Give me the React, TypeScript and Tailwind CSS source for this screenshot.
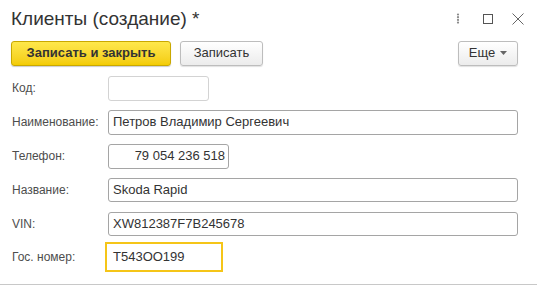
import React from "react";

const Row = ({ label, children, h = "h-[34px]" }: { label: string; children: React.ReactNode; h?: string }) => (
  <div className={`flex items-center ${h}`}>
    <div className="w-[96px] shrink-0 text-[12px] text-[#4d4d4d]">{label}</div>
    {children}
  </div>
);

export default function App() {
  return (
    <div
      className="w-[537px] h-[286px] bg-white relative overflow-hidden flex flex-col"
      style={{ fontFamily: '"Liberation Sans", Arial, sans-serif' }}
    >
      {/* Title row */}
      <div className="flex items-center h-[34px] pl-[11px] pr-[4px] pt-[3px]">
        <div className="text-[19px] leading-[22px] text-[#333333] flex-1">Клиенты (создание) *</div>
        <div className="flex items-center">
          <div className="w-[30px] flex justify-center">
            <svg width="4" height="11" viewBox="0 0 4 11">
              <circle cx="2" cy="1.5" r="1.1" fill="#8a8a8a" />
              <circle cx="2" cy="4.2" r="1.1" fill="#8a8a8a" />
              <circle cx="2" cy="6.9" r="1.1" fill="#8a8a8a" />
              <circle cx="2" cy="9.6" r="1.1" fill="#8a8a8a" />
            </svg>
          </div>
          <div className="w-[30px] flex justify-center">
            <div className="w-[10px] h-[10px] border border-[#555555]" />
          </div>
          <div className="w-[30px] flex justify-center">
            <svg width="12" height="12" viewBox="0 0 12 12">
              <path d="M0.5 0.5 L11.5 11.5 M11.5 0.5 L0.5 11.5" stroke="#666666" strokeWidth="1" />
            </svg>
          </div>
        </div>
      </div>

      {/* Buttons row */}
      <div className="flex items-center h-[26px] mt-[6px] pl-[11px] pr-[19px]">
        <button className="h-[25px] w-[160px] rounded-[3px] border border-[#c9a800] bg-gradient-to-b from-[#ffe84a] to-[#f3cc00] text-[13px] font-bold text-[#333333] shadow-[0_1px_1px_rgba(0,0,0,0.2)]">
          Записать и закрыть
        </button>
        <button className="ml-[9px] h-[25px] w-[83px] rounded-[3px] border border-[#bdbdbd] bg-gradient-to-b from-[#ffffff] to-[#ececec] text-[13px] text-[#333333] shadow-[0_1px_1px_rgba(0,0,0,0.12)]">
          Записать
        </button>
        <div className="flex-1" />
        <button className="h-[25px] w-[60px] rounded-[3px] border border-[#bdbdbd] bg-gradient-to-b from-[#ffffff] to-[#ececec] text-[13px] text-[#333333] shadow-[0_1px_1px_rgba(0,0,0,0.12)] flex items-center justify-center gap-[5px]">
          <span>Еще</span>
          <svg width="7" height="4" viewBox="0 0 7 4">
            <path d="M0 0 L7 0 L3.5 4 Z" fill="#666666" />
          </svg>
        </button>
      </div>

      {/* Form */}
      <div className="flex flex-col pl-[12px] pr-[19px] mt-[5px] text-[12px]">
        <Row label="Код:">
          <div className="w-[101px] h-[25px] rounded-[3px] border border-[#d3d3d3] bg-white" />
        </Row>
        <Row label="Наименование:">
          <div className="flex-1 h-[25px] rounded-[3px] border border-[#a5a5a5] bg-white flex items-center px-[4px] text-[13px] text-[#333333]">
            Петров Владимир Сергеевич
          </div>
        </Row>
        <Row label="Телефон:">
          <div className="w-[121px] h-[25px] rounded-[3px] border border-[#a5a5a5] bg-white flex items-center justify-end px-[3px] text-[13px] text-[#333333]">
            79 054 236 518
          </div>
        </Row>
        <Row label="Название:">
          <div className="flex-1 h-[24px] rounded-[3px] border border-[#a5a5a5] bg-white flex items-center px-[4px] text-[13px] text-[#333333]">
            Skoda Rapid
          </div>
        </Row>
        <Row label="VIN:">
          <div className="flex-1 h-[24px] rounded-[3px] border border-[#a5a5a5] bg-white flex items-center px-[4px] text-[13px] text-[#333333]">
            XW812387F7B245678
          </div>
        </Row>
        <Row label="Гос. номер:" h="h-[31px]">
          <div className="-ml-[3px] w-[118px] h-[30px] border-2 border-[#f5c518] bg-white flex items-center px-[6px] text-[13px] text-[#333333]">
            T543OO199
          </div>
        </Row>
      </div>

      <div className="absolute left-0 right-0 top-[284px] h-[1px] bg-[#c8c8c8]" />
    </div>
  );
}
